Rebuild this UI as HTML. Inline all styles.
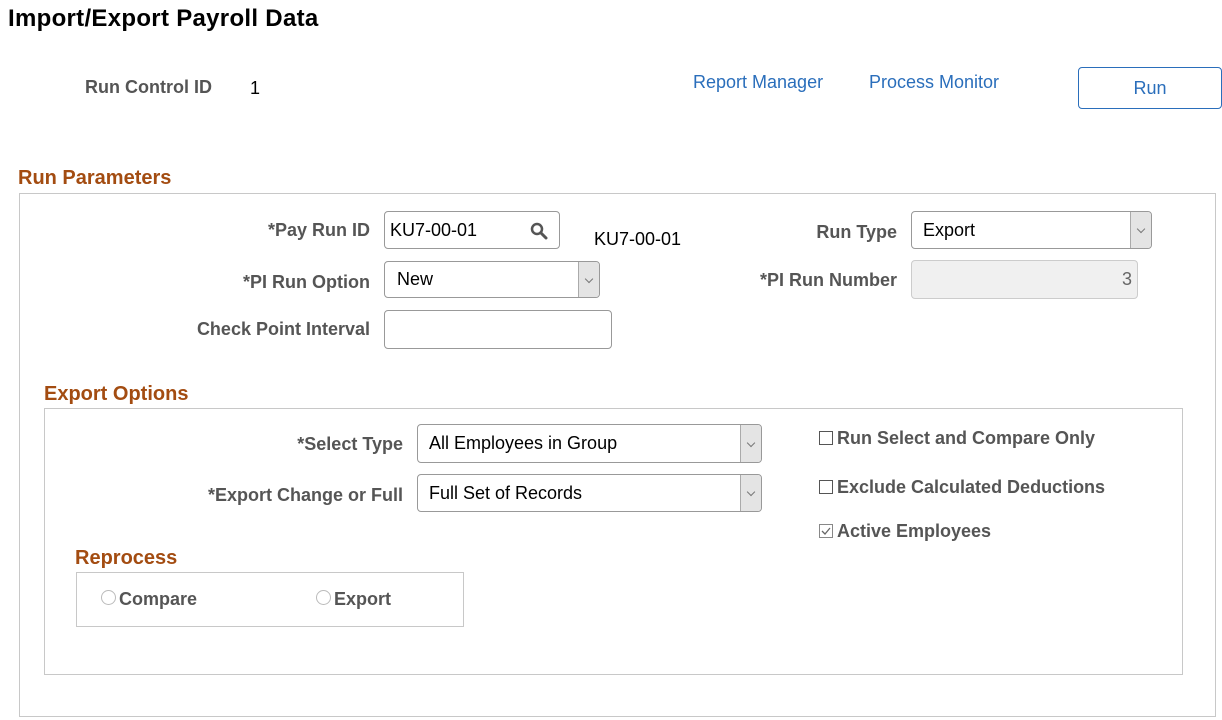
<!DOCTYPE html>
<html><head><meta charset="utf-8"><style>
body{margin:0;width:1222px;height:720px;background:#fff;font-family:"Liberation Sans",Arial,sans-serif;position:relative;overflow:hidden}
.a{position:absolute;white-space:nowrap}
.lbl{color:#555;font-weight:bold;font-size:18px}
.r{text-align:right}
.hdr{color:#a34c11;font-weight:bold;font-size:20px}
.box{position:absolute;border:1px solid #c8c8c8}
.inp{position:absolute;border:1px solid #999;border-radius:4px;box-sizing:border-box;background:#fff;font-size:18px;color:#000;padding-left:7px;display:flex;align-items:center}
.sel .arr{position:absolute;right:0;top:0;bottom:0;width:20px;background:#e4e4e4;border-left:1px solid #aaa;border-radius:0 3px 3px 0}
.sel .arr:after{content:"";position:absolute;left:7px;top:50%;margin-top:-4px;width:5px;height:5px;border-right:1px solid #777;border-bottom:1px solid #777;transform:rotate(45deg)}
.link{color:#2a6ebb;font-size:18px}
.cb{display:inline-block;width:12px;height:12px;border:1px solid #555;vertical-align:-1px;margin-right:4px;position:relative}
.rd{display:inline-block;width:13px;height:13px;border:1px solid #bbb;border-radius:50%;margin-right:3px;vertical-align:0}
</style></head><body>
<div class="a" style="left:8px;top:5px;font-size:24px;font-weight:bold;color:#000;letter-spacing:0.3px">Import/Export Payroll Data</div>
<div class="a lbl" style="left:85px;top:77px">Run Control ID</div>
<div class="a" style="left:250px;top:78px;font-size:18px">1</div>
<div class="a link" style="left:693px;top:72px">Report Manager</div>
<div class="a link" style="left:869px;top:72px">Process Monitor</div>
<div class="a" style="left:1078px;top:67px;width:142px;height:40px;border:1px solid #2a6ebb;border-radius:4px;color:#2a6ebb;font-size:18px;text-align:center;line-height:40px">Run</div>

<div class="a hdr" style="left:18px;top:167px">Run Parameters</div>
<div class="box" style="left:19px;top:193px;width:1195px;height:522px"></div>

<div class="a lbl r" style="left:150px;width:220px;top:220px">*Pay Run ID</div>
<div class="inp" style="left:384px;top:211px;width:176px;height:38px;padding-left:5px">KU7-00-01
<svg style="position:absolute;right:11px;top:10px" width="18" height="18" viewBox="0 0 18 18"><circle cx="7" cy="7" r="5" fill="none" stroke="#555" stroke-width="2.5"/><line x1="11" y1="11" x2="16" y2="16" stroke="#555" stroke-width="3" stroke-linecap="round"/></svg></div>
<div class="a" style="left:594px;top:229px;font-size:18px">KU7-00-01</div>
<div class="a lbl r" style="left:150px;width:220px;top:272px">*PI Run Option</div>
<div class="inp sel" style="left:384px;top:261px;width:216px;height:37px;padding-left:12px">New<span class="arr"></span></div>
<div class="a lbl r" style="left:150px;width:220px;top:319px">Check Point Interval</div>
<div class="inp" style="left:384px;top:310px;width:228px;height:39px"></div>

<div class="a lbl r" style="left:700px;width:197px;top:222px">Run Type</div>
<div class="inp sel" style="left:911px;top:211px;width:241px;height:38px;padding-left:11px">Export<span class="arr"></span></div>
<div class="a lbl r" style="left:700px;width:197px;top:270px">*PI Run Number</div>
<div class="inp" style="left:911px;top:260px;width:227px;height:39px;background:#f0f0f0;border-color:#ccc;justify-content:flex-end;padding-right:5px;color:#666">3</div>

<div class="a hdr" style="left:44px;top:383px">Export Options</div>
<div class="box" style="left:44px;top:408px;width:1137px;height:265px"></div>
<div class="a lbl r" style="left:200px;width:203px;top:434px">*Select Type</div>
<div class="inp sel" style="left:417px;top:424px;width:345px;height:39px;padding-left:11px">All Employees in Group<span class="arr"></span></div>
<div class="a lbl r" style="left:150px;width:253px;top:485px">*Export Change or Full</div>
<div class="inp sel" style="left:417px;top:474px;width:345px;height:38px;padding-left:11px">Full Set of Records<span class="arr"></span></div>

<div class="a lbl" style="left:819px;top:428px"><span class="cb"></span>Run Select and Compare Only</div>
<div class="a lbl" style="left:819px;top:477px"><span class="cb"></span>Exclude Calculated Deductions</div>
<div class="a lbl" style="left:819px;top:521px"><span class="cb" style="border-color:#888"><svg style="position:absolute;left:1px;top:1px" width="10" height="10" viewBox="0 0 10 10"><path d="M1 5 L4 8 L9 2" fill="none" stroke="#666" stroke-width="1.3"/></svg></span>Active Employees</div>

<div class="a hdr" style="left:75px;top:547px">Reprocess</div>
<div class="box" style="left:76px;top:572px;width:386px;height:53px"></div>
<div class="a lbl" style="left:101px;top:589px"><span class="rd"></span>Compare</div>
<div class="a lbl" style="left:316px;top:589px"><span class="rd"></span>Export</div>
</body></html>
